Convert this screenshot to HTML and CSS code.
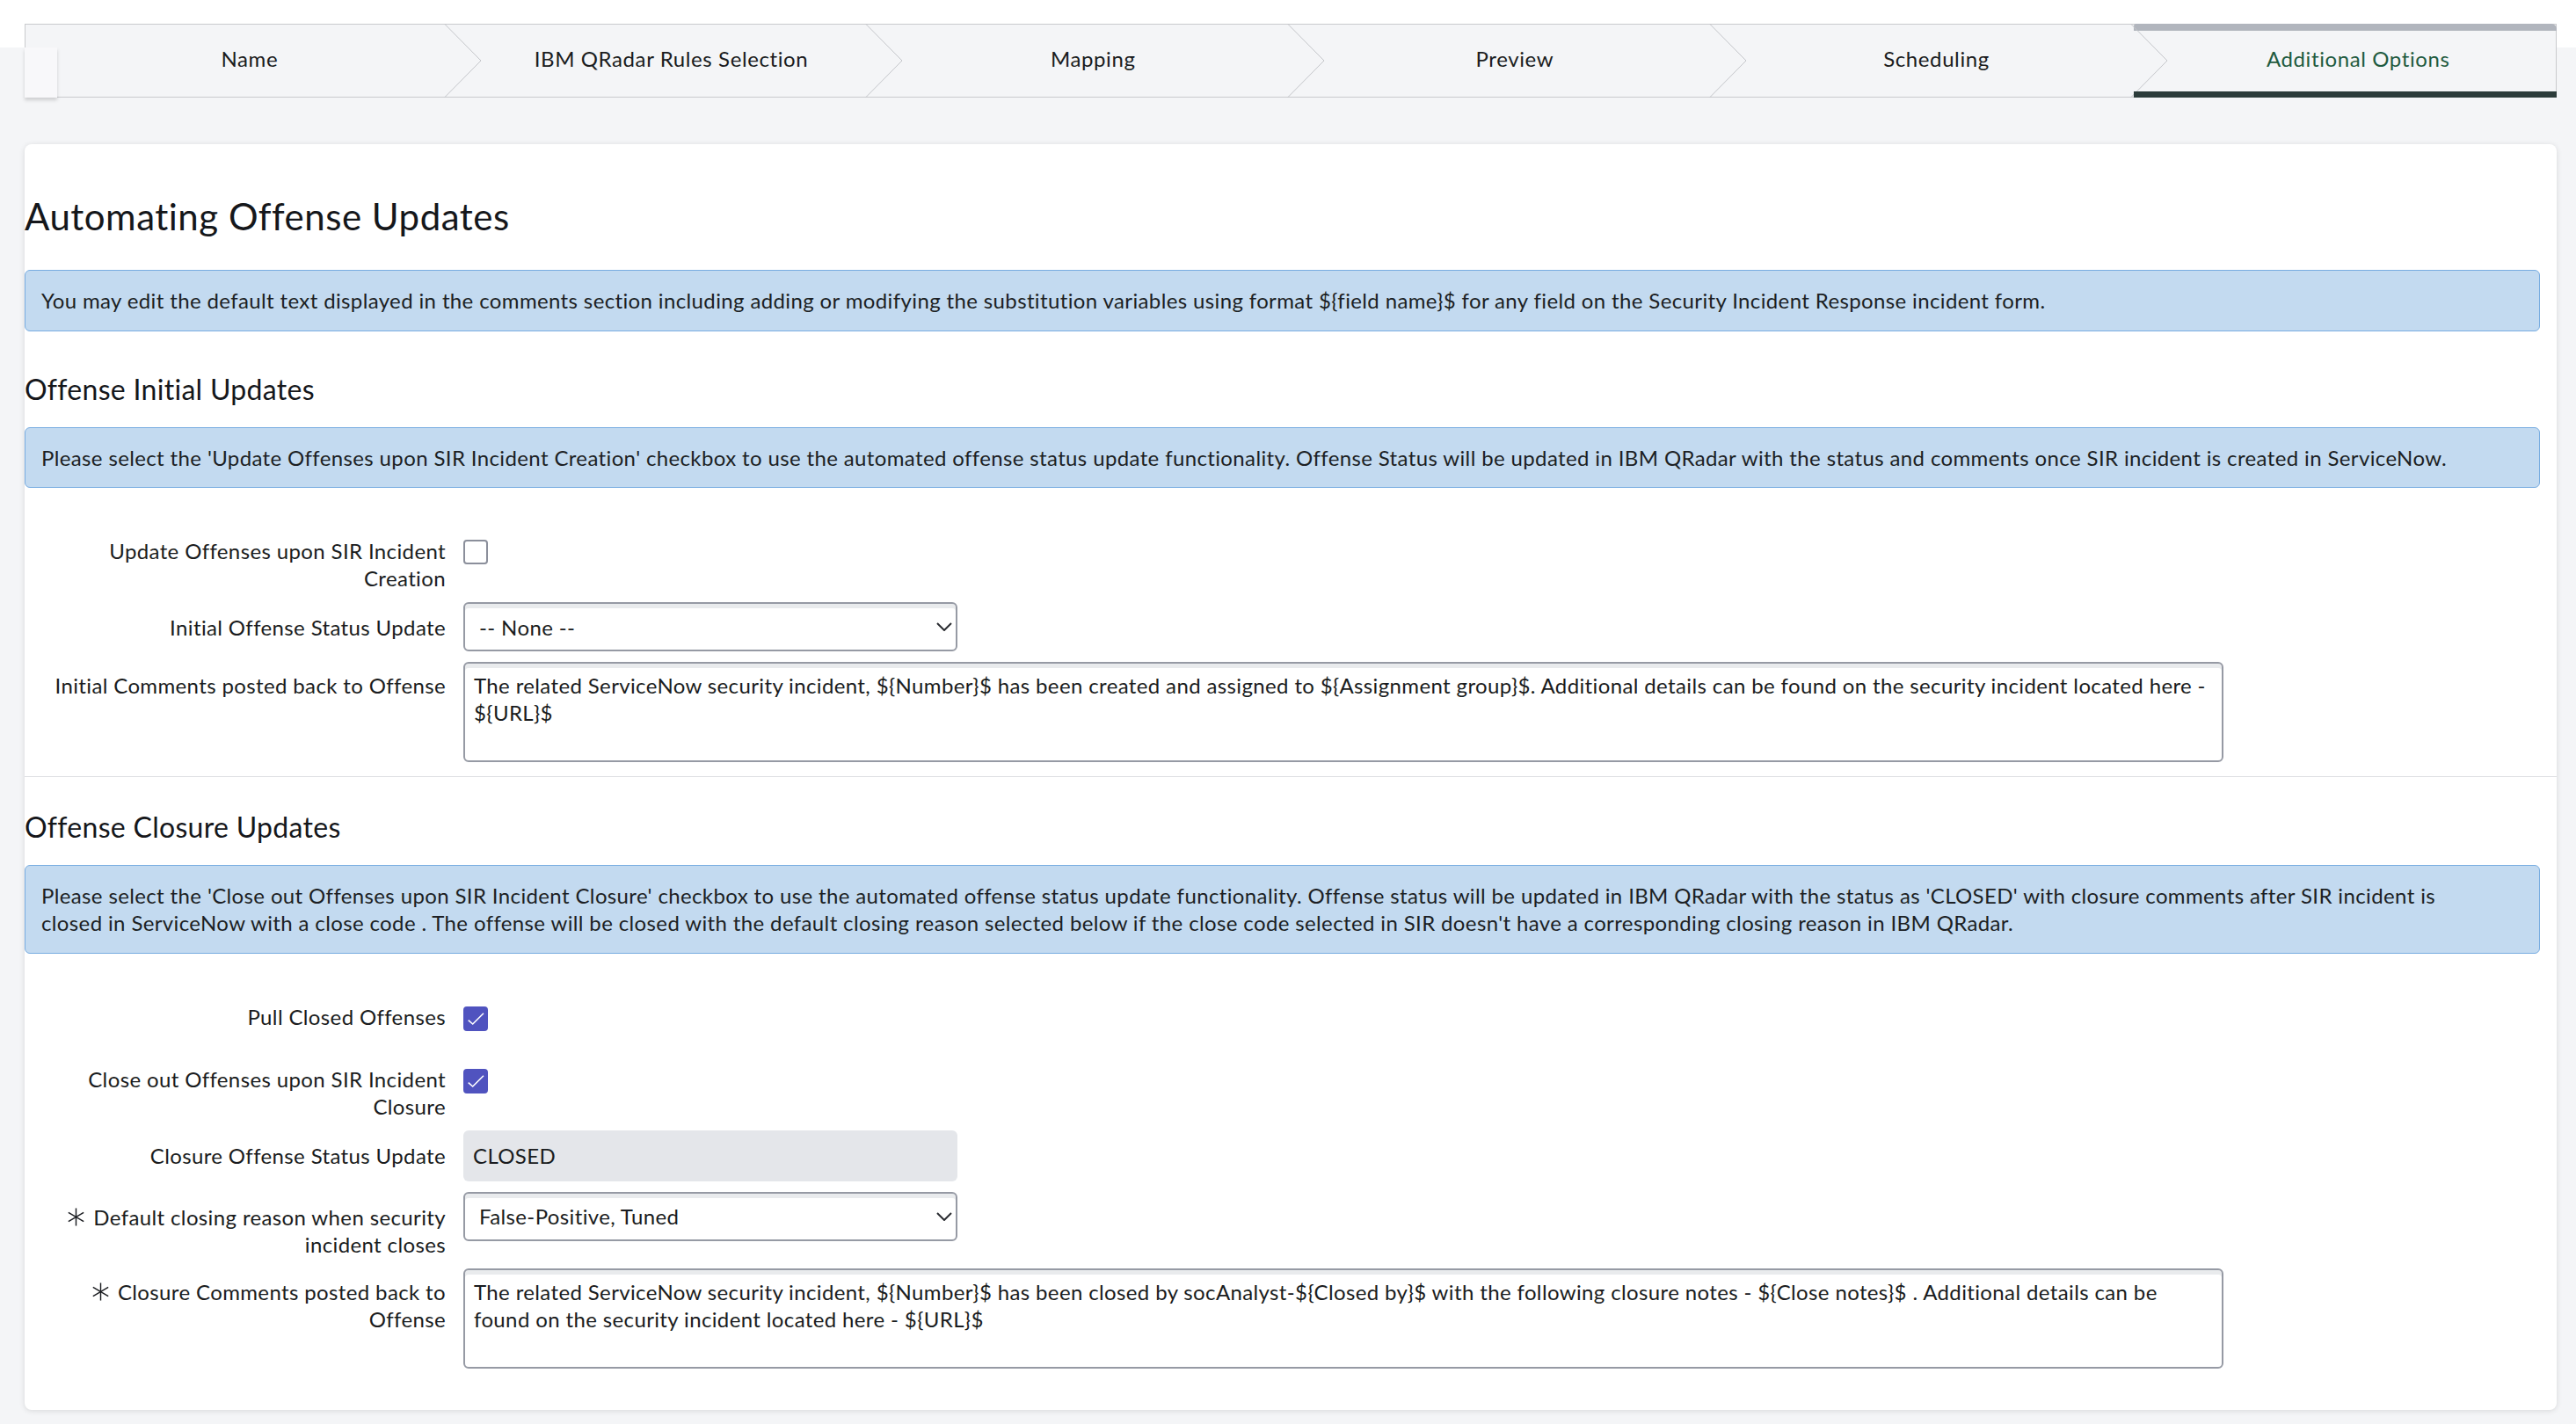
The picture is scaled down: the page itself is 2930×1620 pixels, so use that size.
FILE: index.html
```html
<!DOCTYPE html>
<html lang="en">
<head>
<meta charset="utf-8">
<title>Additional Options</title>
<link rel="stylesheet" href="styles.css">
</head>
<body>
  <nav class="wizard">
    <div class="wizard-stub"></div>
    <div class="step">Name</div>
    <div class="step"><svg class="step-sep" viewBox="0 0 44 84"><polyline points="0.5,0 42,42 0.5,84"/></svg>IBM QRadar Rules Selection</div>
    <div class="step"><svg class="step-sep" viewBox="0 0 44 84"><polyline points="0.5,0 42,42 0.5,84"/></svg>Mapping</div>
    <div class="step"><svg class="step-sep" viewBox="0 0 44 84"><polyline points="0.5,0 42,42 0.5,84"/></svg>Preview</div>
    <div class="step"><svg class="step-sep" viewBox="0 0 44 84"><polyline points="0.5,0 42,42 0.5,84"/></svg>Scheduling</div>
    <div class="step is-active"><svg class="step-sep" viewBox="0 0 44 84"><polyline points="0.5,0 42,42 0.5,84"/></svg>Additional Options</div>
  </nav>

  <main class="card">
    <h1 class="page-title">Automating Offense Updates</h1>
    <div class="notice notice--intro">You may edit the default text displayed in the comments section including adding or modifying the substitution variables using format ${field name}$ for any field on the Security Incident Response incident form.</div>

    <section class="group group--initial">
      <h2 class="group-title">Offense Initial Updates</h2>
      <div class="notice">Please select the 'Update Offenses upon SIR Incident Creation' checkbox to use the automated offense status update functionality. Offense Status will be updated in IBM QRadar with the status and comments once SIR incident is created in ServiceNow.</div>

      <div class="fields">
        <div class="field field--check">
          <label class="field-label">Update Offenses upon SIR Incident Creation</label>
          <span class="checkbox"></span>
        </div>
        <div class="field field--select">
          <label class="field-label">Initial Offense Status Update</label>
          <div class="select">
            <select class="select-input"><option>-- None --</option></select>
            <svg class="select-caret" viewBox="0 0 18 10"><polyline points="1,1 9,9 17,1"/></svg>
          </div>
        </div>
        <div class="field field--text">
          <label class="field-label">Initial Comments posted back to Offense</label>
          <textarea class="textarea">The related ServiceNow security incident, ${Number}$ has been created and assigned to ${Assignment group}$. Additional details can be found on the security incident located here - ${URL}$</textarea>
        </div>
      </div>
    </section>

    <hr class="divider">

    <section class="group group--closure">
      <h2 class="group-title">Offense Closure Updates</h2>
      <div class="notice">Please select the 'Close out Offenses upon SIR Incident Closure' checkbox to use the automated offense status update functionality. Offense status will be updated in IBM QRadar with the status as 'CLOSED' with closure comments after SIR incident is closed in ServiceNow with a close code . The offense will be closed with the default closing reason selected below if the close code selected in SIR doesn't have a corresponding closing reason in IBM QRadar.</div>

      <div class="fields">
        <div class="field field--check field--spaced">
          <label class="field-label">Pull Closed Offenses</label>
          <span class="checkbox is-checked"><svg viewBox="0 0 28 28"><polyline points="5.7,15.7 10.7,20 23,7.7"/></svg></span>
        </div>
        <div class="field field--check">
          <label class="field-label">Close out Offenses upon SIR Incident Closure</label>
          <span class="checkbox is-checked"><svg viewBox="0 0 28 28"><polyline points="5.7,15.7 10.7,20 23,7.7"/></svg></span>
        </div>
        <div class="field field--readonly">
          <label class="field-label">Closure Offense Status Update</label>
          <div class="readonly">CLOSED</div>
        </div>
        <div class="field field--select">
          <label class="field-label"><svg class="required" viewBox="0 0 22 22"><line x1="11" y1="0.5" x2="11" y2="21.5"/><line x1="1.9" y1="5.75" x2="20.1" y2="16.25"/><line x1="1.9" y1="16.25" x2="20.1" y2="5.75"/></svg>Default closing reason when security incident closes</label>
          <div class="select">
            <select class="select-input"><option>False-Positive, Tuned</option></select>
            <svg class="select-caret" viewBox="0 0 18 10"><polyline points="1,1 9,9 17,1"/></svg>
          </div>
        </div>
        <div class="field field--text">
          <label class="field-label"><svg class="required" viewBox="0 0 22 22"><line x1="11" y1="0.5" x2="11" y2="21.5"/><line x1="1.9" y1="5.75" x2="20.1" y2="16.25"/><line x1="1.9" y1="16.25" x2="20.1" y2="5.75"/></svg>Closure Comments posted back to Offense</label>
          <textarea class="textarea">The related ServiceNow security incident, ${Number}$ has been closed by socAnalyst-${Closed by}$ with the following closure notes - ${Close notes}$ . Additional details can be found on the security incident located here - ${URL}$</textarea>
        </div>
      </div>
    </section>
  </main>
</body>
</html>
```

FILE: styles.css
```css
* {
  box-sizing: border-box;
}

html, body {
  margin: 0;
  padding: 0;
}

body {
  min-height: 1620px;
  font-family: Lato, "Open Sans", "Liberation Sans", sans-serif;
  font-size: 24px;
  line-height: 1.3;
  letter-spacing: 0.37px;
  color: #1a1c20;
  background: linear-gradient(#ffffff 0, #ffffff 54px, #f4f5f7 54px);
  overflow: hidden;
}

/* ---------- wizard steps ---------- */
.wizard {
  position: relative;
  display: flex;
  width: 2880px;
  height: 84px;
  margin: 27px 0 0 28px;
  border: 1px solid #c9cacd;
  background: #f4f5f7;
}

.wizard-stub {
  position: absolute;
  left: -1px;
  top: 26px;
  width: 37px;
  height: 57px;
  background: #f8f8fa;
  box-shadow: 0 3px 4px rgba(0, 0, 0, 0.16);
  z-index: 2;
}

.step {
  position: relative;
  flex: 1 1 0;
  display: flex;
  align-items: center;
  justify-content: center;
  padding: 0 0 3px 30px;
  font-size: 24px;
  line-height: 1.2;
  letter-spacing: 0.6px;
  color: #1a1c20;
  white-space: nowrap;
}

.step-sep {
  position: absolute;
  left: -4px;
  top: -1px;
  width: 44px;
  height: 84px;
  overflow: visible;
}

.step-sep polyline {
  fill: none;
  stroke: #c4c6ca;
  stroke-width: 1;
}

.step.is-active {
  color: #1f5b40;
}

.step.is-active::before {
  content: "";
  position: absolute;
  left: 0;
  right: -1px;
  top: -1px;
  height: 8px;
  background: #b1b5bd;
  border-radius: 3px 6px 0 0;
}

.step.is-active::after {
  content: "";
  position: absolute;
  left: 0;
  right: -1px;
  bottom: -1px;
  height: 7px;
  background: #2c3c3b;
}

/* ---------- card ---------- */
.card {
  width: 2880px;
  margin: 53px 0 0 28px;
  padding: 57px 19px 47px 0;
  background: #ffffff;
  border-radius: 8px;
  box-shadow: 0 1px 6px rgba(0, 0, 0, 0.12);
}

.page-title {
  margin: 0;
  font-size: 42px;
  font-weight: 400;
  line-height: 1.2;
  letter-spacing: 0.5px;
  color: #15171b;
}

.notice {
  margin-top: 25px;
  padding: 18px 70px 18px 18px;
  background: #c3daf0;
  border: 1px solid #79ade1;
  border-radius: 6px;
  color: #1c1f24;
}

.notice--intro {
  margin-top: 36px;
}

.group--initial {
  margin-top: 48px;
}

.group--closure {
  margin-top: 39px;
}

.group-title {
  margin: 0;
  font-size: 32px;
  font-weight: 400;
  line-height: 36px;
  letter-spacing: 0.3px;
  color: #15171b;
}

.divider {
  margin: 16px -19px 0 0;
  border: 0;
  border-top: 1px solid #dedfe2;
  height: 0;
}

/* ---------- form fields ---------- */
.fields {
  display: flex;
  flex-direction: column;
  gap: 12px;
  padding-top: 56px;
}

.field {
  display: flex;
  align-items: flex-start;
  gap: 20px;
  padding-left: 19px;
}

.field--spaced {
  margin-bottom: 27px;
}

.field-label {
  flex: 0 0 460px;
  text-align: right;
  color: #1a1c20;
}

.field--select .field-label,
.field--readonly .field-label {
  padding-top: 13px;
}

.field--text .field-label {
  padding-top: 11px;
}

.required {
  width: 21px;
  height: 21px;
  margin-right: 9px;
  vertical-align: -1px;
}

.required line {
  stroke: #1a1c20;
  stroke-width: 1.5;
}

.checkbox {
  flex: 0 0 28px;
  width: 28px;
  height: 28px;
  margin-top: 3px;
  border: 2px solid #8b8f9b;
  border-radius: 4px;
  background: #ffffff;
}

.checkbox.is-checked {
  margin-top: 4px;
  border-color: #5053bf;
  background: #5053bf;
}

.checkbox svg {
  display: block;
  width: 28px;
  height: 28px;
  margin: -2px;
}

.checkbox polyline {
  fill: none;
  stroke: #ffffff;
  stroke-width: 1.6;
}

.select {
  position: relative;
  width: 562px;
}

.select-input {
  display: block;
  width: 100%;
  height: 56px;
  padding: 0 40px 0 16px;
  font: inherit;
  letter-spacing: inherit;
  color: #1a1c20;
  background: #ffffff;
  border: 2px solid #969aa4;
  border-radius: 6px;
  box-shadow: inset 0 5px 0 #e9ebed;
  appearance: none;
  -webkit-appearance: none;
}

.select-caret {
  position: absolute;
  right: 6px;
  top: 23px;
  width: 18px;
  height: 10px;
  pointer-events: none;
}

.select-caret polyline {
  fill: none;
  stroke: #2a2c31;
  stroke-width: 2;
}

.textarea {
  display: block;
  width: 2002px;
  height: 114px;
  padding: 9px 12px 9px 10px;
  font: inherit;
  line-height: 1.3;
  letter-spacing: inherit;
  color: #1a1c20;
  background: #ffffff;
  border: 2px solid #969aa4;
  border-radius: 6px;
  box-shadow: inset 0 5px 0 #e9ebed;
  resize: none;
  overflow: hidden;
}

.readonly {
  display: flex;
  align-items: center;
  width: 562px;
  height: 58px;
  padding-left: 11px;
  background: #e4e6ea;
  border-radius: 6px;
  color: #1a1c20;
}
```
